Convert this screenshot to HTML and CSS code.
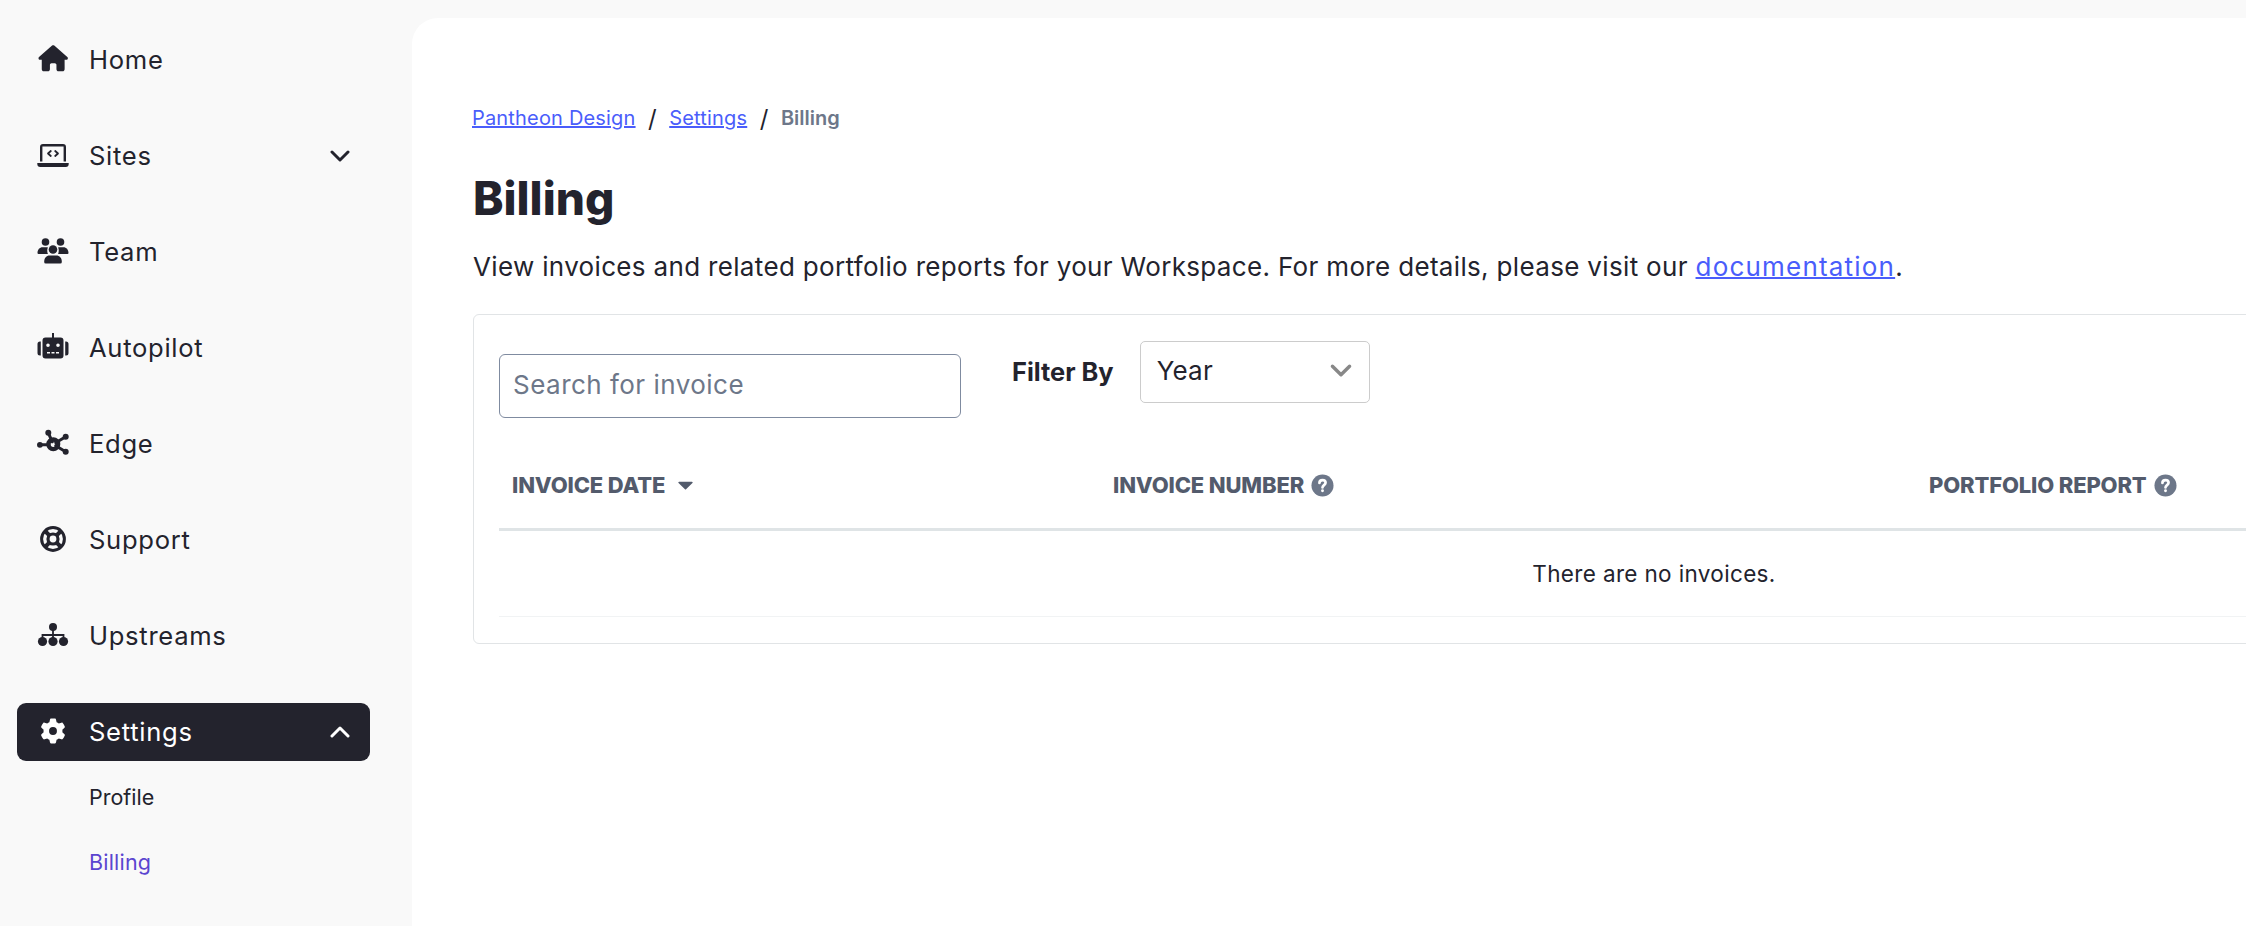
FILE: index.html
```html
<!DOCTYPE html>
<html lang="en">
<head>
<meta charset="utf-8">
<title>Billing</title>
<link rel="stylesheet" href="styles.css">
</head>
<body>
<div class="app">
  <aside class="sidebar">
    <nav class="nav">
      <a class="nav-link">
        <svg class="nav-icon" viewBox="0 0 32 32"><g transform="translate(1.500 1.200) scale(.051)"><path d="M575.8 255.5c0 18-15 32.1-32 32.1h-32l.7 160.2c0 2.7-.2 5.4-.5 8.1V472c0 22.1-17.9 40-40 40H456c-1.1 0-2.2 0-3.3-.1c-1.4 .1-2.8 .1-4.2 .1H416 392c-22.1 0-40-17.9-40-40V448 384c0-17.7-14.3-32-32-32H256c-17.7 0-32 14.3-32 32v64 24c0 22.1-17.9 40-40 40H160 128.1c-1.5 0-3-.1-4.5-.2c-1.2 .1-2.4 .2-3.6 .2H104c-22.1 0-40-17.9-40-40V360c0-.9 0-1.9 .1-2.8V287.6H32c-18 0-32-14-32-32.1c0-9 3-17 10-24L266.4 8c7-7 15-8 22-8s15 2 21 7L564.8 231.5c8 7 12 15 11 24z"/></g></svg>
        <span class="nav-label">Home</span>
      </a>
      <a class="nav-link">
        <svg class="nav-icon" viewBox="0 0 32 32"><g transform="translate(0 .5)"><path d="M6 3.500h20a3 3 0 0 1 3 3V21h-2.400V5.900H5.400V21H3V6.500a3 3 0 0 1 3-3z"/><path d="M.3 22.500h31.400v1a3 3 0 0 1-3 3H3.300a3 3 0 0 1-3-3z"/><path class="ln" d="M13.800 10.500 11 13l2.800 2.500M18.200 10.500 21 13l-2.800 2.500" stroke-width="1.800"/></g></svg>
        <span class="nav-label">Sites</span>
        <svg class="nav-chevron" viewBox="0 0 20 14"><path class="ln" d="M2 3l8 8 8-8" stroke-width="3"/></svg>
      </a>
      <a class="nav-link">
        <svg class="nav-icon" viewBox="0 0 32 32"><circle cx="8.500" cy="6" r="3.800"/><circle cx="23.500" cy="6" r="3.800"/><circle cx="16" cy="13.500" r="4.300"/><path d="M.5 17c0-3.400 2.200-5.800 5-5.800h4.300c.4 0 .8 .1 1.100 .2-.9 1.600-.9 4.400 0 6.600H1.500a1 1 0 0 1-1-1zM31.500 17c0-3.400-2.200-5.800-5-5.800h-4.300c-.4 0-.8 .1-1.100 .2 .9 1.600 .9 4.400 0 6.600h9.400a1 1 0 0 0 1-1z"/><path d="M12.500 19.500h7c3 0 5.300 2.600 5.300 5.800v.7a1.500 1.500 0 0 1-1.500 1.500H8.700a1.500 1.500 0 0 1-1.500-1.500v-.7c0-3.200 2.300-5.800 5.300-5.800z"/></svg>
        <span class="nav-label">Team</span>
      </a>
      <a class="nav-link">
        <svg class="nav-icon" viewBox="0 0 32 32"><g transform="translate(0 -1)"><rect x="15" y="2" width="2" height="6"/><path fill-rule="evenodd" d="M8.500 6.500h15a3 3 0 0 1 3 3v15a3 3 0 0 1-3 3h-15a3 3 0 0 1-3-3v-15a3 3 0 0 1 3-3zM11 12.500a1.800 1.800 0 1 0 0 3.600 1.800 1.800 0 0 0 0-3.600zm10 0a1.800 1.800 0 1 0 0 3.600 1.800 1.800 0 0 0 0-3.600zM10 21v1.600h3V21zm4.500 0v1.600h3V21zm4.500 0v1.600h3V21z"/><path d="M3.800 10.500v14H3a2.500 2.500 0 0 1-2.500-2.500v-9A2.500 2.500 0 0 1 3 10.500zM28.200 10.500v14h.8a2.500 2.500 0 0 0 2.500-2.500v-9a2.500 2.500 0 0 0-2.500-2.500z"/></g></svg>
        <span class="nav-label">Autopilot</span>
      </a>
      <a class="nav-link">
        <svg class="nav-icon" viewBox="0 0 32 32"><path class="ln" d="M2.800 16.800h9M11.300 4.800l4 9M28.700 8.700l-10 6M28.700 23.700l-10-6" stroke-width="3"/><circle cx="2.900" cy="16.800" r="2.900"/><circle cx="11.300" cy="4.800" r="3"/><circle cx="28.700" cy="8.700" r="3"/><circle cx="28.700" cy="23.700" r="3"/><circle class="ring" cx="16.300" cy="16.300" r="4.800" stroke-width="4.400"/></svg>
        <span class="nav-label">Edge</span>
      </a>
      <a class="nav-link">
        <svg class="nav-icon" viewBox="0 0 32 32"><g transform="translate(0 -1)"><circle class="ring" cx="16" cy="16" r="11.400" stroke-width="3"/><circle class="ring" cx="16" cy="16" r="5" stroke-width="3.200"/><path class="bar" d="M7.500 7.500l5 5M24.500 7.500l-5 5M7.500 24.500l5-5M24.500 24.500l-5-5" stroke-width="4"/></g></svg>
        <span class="nav-label">Support</span>
      </a>
      <a class="nav-link">
        <svg class="nav-icon" viewBox="0 0 32 32"><circle cx="16" cy="7" r="4"/><circle cx="5.500" cy="21.500" r="4.600"/><circle cx="16" cy="21.500" r="4.600"/><circle cx="26.500" cy="21.500" r="4.600"/><path class="bar" d="M16 10v9M5.500 19v-4h21v4" stroke-width="1.800"/></svg>
        <span class="nav-label">Upstreams</span>
      </a>
      <a class="nav-link is-active">
        <svg class="nav-icon" viewBox="0 0 32 32"><g transform="translate(3.400 2.400) scale(.0492)"><path d="M495.900 166.600c3.200 8.700 .5 18.400-6.400 24.600l-43.300 39.400c1.100 8.300 1.700 16.800 1.700 25.400s-.6 17.100-1.700 25.400l43.300 39.400c6.900 6.200 9.600 15.900 6.400 24.600c-4.400 11.900-9.700 23.300-15.800 34.300l-4.700 8.100c-6.600 11-14 21.400-22.100 31.200c-5.900 7.200-15.700 9.600-24.500 6.800l-55.700-17.700c-13.400 10.300-28.200 18.900-44 25.400l-12.500 57.100c-2 9.100-9 16.300-18.200 17.800c-13.800 2.300-28 3.500-42.500 3.500s-28.700-1.200-42.500-3.500c-9.200-1.500-16.200-8.700-18.200-17.800l-12.500-57.100c-15.800-6.500-30.600-15.100-44-25.400L83.100 425.900c-8.800 2.800-18.600 .3-24.500-6.800c-8.100-9.800-15.500-20.200-22.100-31.200l-4.700-8.100c-6.100-11-11.400-22.400-15.800-34.300c-3.200-8.700-.5-18.400 6.400-24.600l43.300-39.400C64.600 273.100 64 264.600 64 256s.6-17.100 1.700-25.400L22.400 191.200c-6.900-6.200-9.600-15.900-6.400-24.600c4.400-11.900 9.700-23.300 15.800-34.300l4.700-8.100c6.600-11 14-21.400 22.100-31.200c5.900-7.200 15.700-9.600 24.500-6.800l55.700 17.700c13.400-10.300 28.200-18.900 44-25.400l12.500-57.100c2-9.100 9-16.300 18.200-17.800C227.300 1.200 241.500 0 256 0s28.700 1.200 42.500 3.500c9.200 1.500 16.200 8.700 18.200 17.800l12.500 57.100c15.800 6.500 30.600 15.100 44 25.400l55.700-17.700c8.800-2.800 18.600-.3 24.500 6.800c8.100 9.800 15.500 20.200 22.100 31.200l4.700 8.100c6.100 11 11.400 22.400 15.800 34.300zM256 336a80 80 0 1 0 0-160 80 80 0 1 0 0 160z"/></g></svg>
        <span class="nav-label">Settings</span>
        <svg class="nav-chevron" viewBox="0 0 20 14"><path class="ln" d="M2 11l8-8 8 8" stroke-width="3"/></svg>
      </a>
      <div class="subnav">
        <a class="sub-link">Profile</a>
        <a class="sub-link is-current">Billing</a>
      </div>
    </nav>
  </aside>
  <main class="main">
    <div class="breadcrumb">
      <a class="link">Pantheon Design</a><span class="crumb-sep">/</span><a class="link">Settings</a><span class="crumb-sep">/</span><span class="crumb-current">Billing</span>
    </div>
    <h1 class="title">Billing</h1>
    <p class="lead">View invoices and related portfolio reports for your Workspace. For more details, please visit our <a class="link">documentation</a>.</p>
    <section class="card">
      <div class="toolbar">
        <input class="search" type="text" placeholder="Search for invoice">
        <span class="filter-label">Filter By</span>
        <div class="select"><span>Year</span><svg class="select-chevron" viewBox="0 0 20 14"><path class="ln" d="M2 3l8 8 8-8" stroke-width="3.200"/></svg></div>
      </div>
      <table class="table">
        <colgroup><col class="col-date"><col class="col-number"><col class="col-report"></colgroup>
        <thead>
          <tr>
            <th><span class="th-inner">Invoice Date<svg class="sort" viewBox="0 0 14 8"><path d="M1 .5h12a.7 .7 0 0 1 .5 1.200L7.500 7.500a.7 .7 0 0 1-1 0L.5 1.700A.7 .7 0 0 1 1 .5z"/></svg></span></th>
            <th><span class="th-inner">Invoice Number<svg class="help" viewBox="0 0 24 24"><circle cx="12" cy="12" r="11.500"/><path class="q" d="M8.800 9.400c0-1.900 1.400-3 3.200-3s3.200 1.100 3.200 2.800c0 2.400-3.200 2.500-3.200 4.900"/><circle class="qd" cx="12" cy="17.500" r="1.500"/></svg></span></th>
            <th><span class="th-inner">Portfolio Report<svg class="help" viewBox="0 0 24 24"><circle cx="12" cy="12" r="11.500"/><path class="q" d="M8.800 9.400c0-1.900 1.400-3 3.200-3s3.200 1.100 3.200 2.800c0 2.400-3.200 2.500-3.200 4.900"/><circle class="qd" cx="12" cy="17.500" r="1.500"/></svg></span></th>
          </tr>
        </thead>
        <tbody>
          <tr><td class="empty" colspan="3">There are no invoices.</td></tr>
        </tbody>
      </table>
    </section>
  </main>
</div>
</body>
</html>
```

FILE: styles.css
```css
* { box-sizing: border-box; }
html, body { margin: 0; height: 100%; overflow: hidden; }
body {
  background: #f9f9f9;
  color: #23232d;
  font-family: Inter, "Open Sans", sans-serif;
}
.app { display: flex; height: 926px; width: 2246px; overflow: hidden; }

.sidebar { flex: 0 0 412px; padding: 31px 42px 0 17px; }
.nav { display: flex; flex-direction: column; gap: 38px; }
.nav-link {
  display: flex;
  align-items: center;
  gap: 20px;
  height: 58px;
  padding: 0 20px;
  border-radius: 9px;
  color: #23232d;
  font-size: 25.600px;
  letter-spacing: .7px;
}
.nav-icon { flex: none; width: 32px; height: 32px; fill: currentColor; }
.nav-label { flex: 1; padding-bottom: 2px; }
.nav-chevron { flex: none; width: 20px; height: 14px; }
.ln { fill: none; stroke: currentColor; stroke-linecap: round; stroke-linejoin: round; }
.bar { fill: none; stroke: currentColor; }
.ring { fill: none; stroke: currentColor; }
.is-active { background: #23232d; color: #fff; }
.subnav { display: flex; flex-direction: column; gap: 33px; margin-top: -18px; padding-left: 72px; }
.sub-link { font-size: 21.500px; line-height: 32px; color: #23232d; }
.sub-link.is-current { color: #5b45d0; letter-spacing: .2px; }

.main {
  flex: none;
  width: 2500px;
  margin-top: 18px;
  padding: 85px 0 0 61px;
  background: #fff;
  border-top-left-radius: 26px;
}
.breadcrumb { display: flex; align-items: center; height: 30px; margin-left: -1px; font-size: 20px; }
.breadcrumb .link { letter-spacing: .18px; }
.link { color: #4a5dfb; text-decoration: underline; }
.crumb-sep { margin: 0 12.500px; color: #23232d; font-size: 24px; }
.crumb-current { color: #6d7789; font-weight: 600; }
.title { margin: 35px 0 19px; font-size: 46px; line-height: 60px; font-weight: 800; }
.lead { margin: 0; font-size: 26px; line-height: 40px; letter-spacing: .335px; }
.lead .link { letter-spacing: 1.2px; text-decoration-thickness: 2px; }

.card {
  width: 2362px;
  margin-top: 27px;
  padding: 26px 25px 26px;
  border: 1px solid #e1e4e6;
  border-radius: 6px;
}
.toolbar { display: flex; align-items: flex-start; height: 76px; }
.search {
  width: 462px;
  height: 64px;
  margin-top: 13px;
  padding: 0 13px 3px;
  border: 1px solid #7f8ba0;
  border-radius: 6px;
  font: 26px Inter, sans-serif;
  letter-spacing: .48px;
  color: #23232d;
  outline: none;
}
.search::placeholder { color: #6d7789; opacity: 1; }
.filter-label { margin: 12px 26px 0 51px; font-size: 25.400px; line-height: 38px; font-weight: 700; }
.select {
  display: flex;
  align-items: center;
  justify-content: space-between;
  width: 230px;
  height: 62px;
  padding: 0 16px 3px 16px;
  border: 1px solid #ccc;
  border-radius: 5px;
  font-size: 26px;
  letter-spacing: .2px;
}
.select-chevron { width: 24px; height: 15px; color: #888; }

.table { width: 2310px; margin-top: 25px; table-layout: fixed; border-collapse: separate; border-spacing: 0; }
.col-date { width: 601px; }
.col-number { width: 816px; }
.table th {
  height: 89px;
  padding: 0 13px;
  border-bottom: 3px solid #dfe4e6;
  color: #535b6c;
  font-size: 22px;
  font-weight: 800;
  letter-spacing: -.15px;
  text-align: left;
  text-transform: uppercase;
}
.th-inner { display: inline-flex; align-items: center; gap: 7px; }
.sort { width: 15px; height: 9px; margin-left: 6px; fill: #535b6c; }
.help { width: 23px; height: 23px; fill: #6d7789; }
.q { fill: none; stroke: #fff; stroke-width: 2.800; stroke-linecap: round; }
.qd { fill: #fff; }
.empty {
  height: 86px;
  padding-bottom: 2px;
  border-bottom: 1px solid #f1f3f4;
  font-size: 22.500px;
  letter-spacing: .35px;
  text-align: center;
}
```
